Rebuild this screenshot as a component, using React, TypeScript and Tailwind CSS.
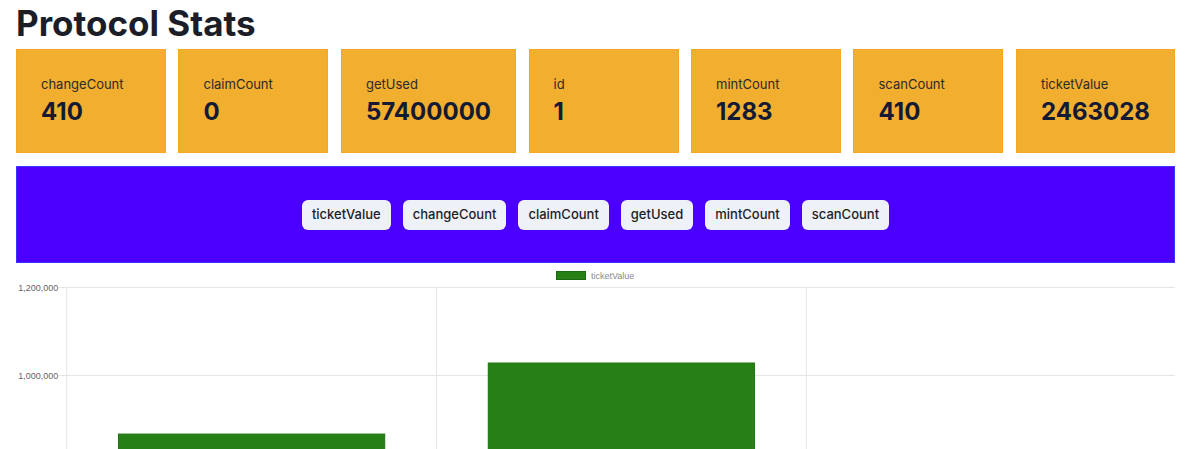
const stats = [
  { label: "changeCount", value: "410" },
  { label: "claimCount", value: "0" },
  { label: "getUsed", value: "57400000" },
  { label: "id", value: "1" },
  { label: "mintCount", value: "1283" },
  { label: "scanCount", value: "410" },
  { label: "ticketValue", value: "2463028" },
]

const metrics = ["ticketValue", "changeCount", "claimCount", "getUsed", "mintCount", "scanCount"]

// chart geometry, relative to the chart's own top-left corner
const axisX = 50.7
const catW = 369.8
const chartH = 190
const yFor = (v: number) => 111 - ((v - 1000000) / 200000) * 88
const bars = [868000, 1029500]

function BarChart() {
  return (
    <svg width="1159" height={chartH} className="block overflow-visible" style={{ fontFamily: '"Liberation Sans", Arial, sans-serif' }}>
      {/* legend */}
      <rect x="540.5" y="6.5" width="29" height="8" fill="#268016" stroke="#1b6a10" strokeWidth="1" />
      <text x="575" y="13.5" fontSize="9" fill="#8a8a8a">ticketValue</text>

      {/* horizontal grid */}
      {[1200000, 1000000].map((v) => (
        <g key={v}>
          <line x1={axisX - 8} x2="1159" y1={yFor(v) - 0.5} y2={yFor(v) - 0.5} stroke="#e5e5e5" strokeWidth="1" />
          <text x={axisX - 8.5} y={yFor(v) + 2.5} fontSize="9" fill="#666" textAnchor="end">
            {v.toLocaleString("en-US")}
          </text>
        </g>
      ))}

      {/* vertical grid */}
      {[0, 1, 2].map((i) => (
        <line key={i} x1={axisX + catW * i} x2={axisX + catW * i} y1={yFor(1200000) - 1} y2={chartH} stroke="#e5e5e5" strokeWidth="1" />
      ))}

      {bars.map((v, i) => {
        const w = catW * 0.72
        const x = axisX + catW * i + (catW - w) / 2
        return (
          <rect key={i} x={x} y={yFor(v)} width={w} height={chartH - yFor(v) + 2} fill="#268016" stroke="#1f7412" strokeWidth="1" />
        )
      })}
    </svg>
  )
}

export default function App() {
  return (
    <div className="min-h-[449px] overflow-hidden bg-white pl-4 pr-[25px] font-['Inter',sans-serif]">
      <h1 className="mb-[3px] text-[35px] leading-[46px] font-bold text-[#1b1e29]">Protocol Stats</h1>

      <div className="flex justify-between">
        {stats.map((s) => (
          <div
            key={s.label}
            className="min-w-[150px] border border-[#f5a81f] bg-[#f2ae2f] px-6 pt-6 pb-6"
          >
            <p className="text-[13px] leading-5 text-[#2b2b2b]">{s.label}</p>
            <p className="mt-0.5 text-2xl leading-8 font-bold text-[#141a33]">{s.value}</p>
          </div>
        ))}
      </div>

      <div className="mt-[13px] flex h-[97px] items-center justify-center gap-3 border border-[#3b36ff] bg-[#4b00ff]">
        {metrics.map((m) => (
          <button
            key={m}
            className="h-[30px] rounded-md bg-[#eef1f8] px-[10px] text-[13px] font-medium text-[#1b1e29]"
          >
            {m}
          </button>
        ))}
      </div>

      <div className="mt-[2px]">
        <BarChart />
      </div>
    </div>
  )
}
